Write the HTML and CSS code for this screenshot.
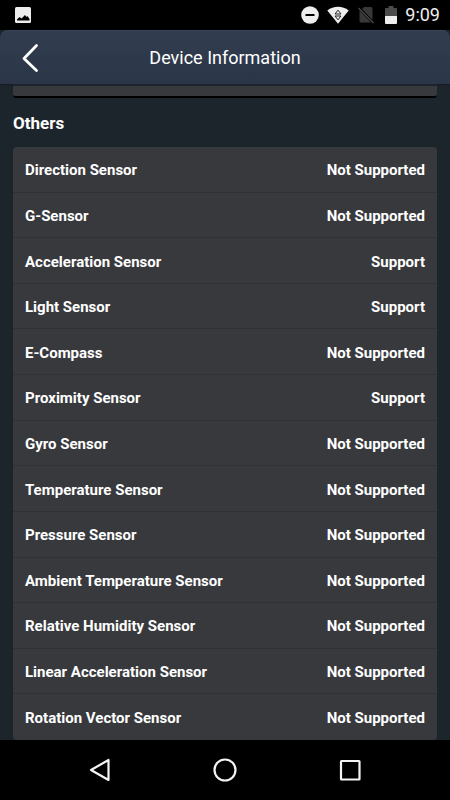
FILE: index.html
```html
<!DOCTYPE html>
<html lang="en">
<head>
<meta charset="utf-8">
<meta name="viewport" content="width=device-width, initial-scale=1">
<title>Device Information</title>
<link rel="stylesheet" href="styles.css">
</head>
<body>
<div class="status">
  <svg class="status-photo" width="16" height="16" viewBox="0 0 16 16" aria-hidden="true"><rect width="16" height="16" rx="1.500" fill="#eee"/><path d="M2 13.500V12.500L4.500 10l2 1.500L10 8l1.500 2 1-1 2 3v1.500z" fill="#000"/></svg>
  <svg width="18" height="18" viewBox="0 0 18 18" aria-hidden="true"><circle cx="9" cy="9" r="8.800" fill="#eee"/><path d="M4.500 9h9" stroke="#000" stroke-width="2"/></svg>
  <svg width="22" height="18" viewBox="0 0 22 18" aria-hidden="true"><path d="M0.300 4.500C6.500-.5 15.500-.5 21.700 4.500L11 17.800z" fill="#eee"/><path d="M11 4.200L14 8H8zM11 13.800L14 10H8z" fill="none" stroke="#222" stroke-width="1"/></svg>
  <svg width="18" height="18" viewBox="0 0 18 18" aria-hidden="true"><path d="M7 1h7q1.500 0 1.500 1.500V14L5 3zM2.500 4.500L14 16.500H4q-1.500 0-1.500-1.500z" fill="#383838"/><path d="M1.500 2L16.500 17" stroke="#4c4c4c" stroke-width="1.300"/></svg>
  <svg class="status-battery" width="12" height="18" viewBox="0 0 12 18" aria-hidden="true"><path d="M1 2h2.500V0h5v2H11q1 0 1 1v7H0V3q0-1 1-1z" fill="#4b4b4b"/><path d="M0 10h12v7q0 1-1 1H1q-1 0-1-1z" fill="#eee"/></svg>
  <time class="clock">9:09</time>
</div>
<header class="bar">
  <button class="back" aria-label="Back"><svg width="20" height="30" viewBox="0 0 20 30"><path d="M16.500 2.500L4 15.500l12.500 12" fill="none" stroke="#fff" stroke-width="2.800" stroke-linecap="round" stroke-linejoin="round"/></svg></button>
  <h1 class="title">Device Information</h1>
</header>
<main class="content">
  <div class="previous"></div>
  <h2 class="heading">Others</h2>
  <dl class="list">
    <div class="row"><dt>Direction Sensor</dt><dd>Not Supported</dd></div>
    <div class="row"><dt>G-Sensor</dt><dd>Not Supported</dd></div>
    <div class="row"><dt>Acceleration Sensor</dt><dd>Support</dd></div>
    <div class="row"><dt>Light Sensor</dt><dd>Support</dd></div>
    <div class="row"><dt>E-Compass</dt><dd>Not Supported</dd></div>
    <div class="row"><dt>Proximity Sensor</dt><dd>Support</dd></div>
    <div class="row"><dt>Gyro Sensor</dt><dd>Not Supported</dd></div>
    <div class="row"><dt>Temperature Sensor</dt><dd>Not Supported</dd></div>
    <div class="row"><dt>Pressure Sensor</dt><dd>Not Supported</dd></div>
    <div class="row"><dt>Ambient Temperature Sensor</dt><dd>Not Supported</dd></div>
    <div class="row"><dt>Relative Humidity Sensor</dt><dd>Not Supported</dd></div>
    <div class="row"><dt>Linear Acceleration Sensor</dt><dd>Not Supported</dd></div>
    <div class="row"><dt>Rotation Vector Sensor</dt><dd>Not Supported</dd></div>
  </dl>
</main>
<nav class="nav">
  <button aria-label="Back"><svg width="26" height="26" viewBox="0 0 26 26"><path d="M21.500 3v20L4 13z" stroke-width="2.200"/></svg></button>
  <button aria-label="Home"><svg width="26" height="26" viewBox="0 0 26 26"><circle cx="13" cy="13" r="10.500" stroke-width="2.200"/></svg></button>
  <button aria-label="Recent apps"><svg width="26" height="26" viewBox="0 0 26 26"><rect x="4" y="4" width="18.500" height="18.500" rx=".5" stroke-width="2.200"/></svg></button>
</nav>
</body>
</html>
```
FILE: styles.css
```css
* {
  box-sizing: border-box;
}

body {
  margin: 0;
  min-height: 100vh;
  display: flex;
  flex-direction: column;
  background: #1d252c;
  color: #fff;
  font-family: Roboto, "Liberation Sans", sans-serif;
}

h1, h2, dl, dd {
  margin: 0;
}

button {
  padding: 0;
  border: 0;
  background: none;
  cursor: pointer;
}

svg {
  display: block;
}

.status {
  height: 30px;
  padding: 0 10px 0 15px;
  display: flex;
  align-items: center;
  gap: 8px;
  background: #000;
}

.status-photo {
  margin-right: auto;
}

.status-battery {
  margin-left: 2px;
}

.clock {
  font-size: 18px;
  line-height: 30px;
  color: #eee;
}

.bar {
  height: 54px;
  padding: 0 20px;
  display: grid;
  grid-template-columns: 20px 1fr 20px;
  align-items: center;
  border-top: 1px solid #3b4558;
  border-radius: 8px 8px 0 0;
  background: linear-gradient(#323d50, #2a3647);
  box-shadow: 0 1px 2px #141a22;
}

.title {
  font-size: 18px;
  line-height: 24px;
  font-weight: 400;
  text-align: center;
}

.content {
  flex: 1;
  padding: 0 13px;
  display: flex;
  flex-direction: column;
}

.previous {
  height: 14px;
  border-top: 2px solid #1d222b;
  border-bottom: 2px solid #000;
  border-radius: 0 0 3px 3px;
  background: #38393d;
}

.heading {
  padding: 13px 0 12px;
  font-size: 17px;
  line-height: 24px;
  font-weight: 700;
}

.list {
  flex: 1;
  display: grid;
  grid-auto-rows: 1fr;
  border-radius: 4px;
  background: #38393d;
  overflow: hidden;
}

.row {
  padding: 2px 12px 0;
  display: flex;
  align-items: center;
  justify-content: space-between;
  font-size: 15px;
  line-height: 20px;
  font-weight: 700;
}

.row:not(:last-child) {
  border-bottom: 1px solid #313236;
}

.nav {
  height: 60px;
  padding: 0 37px;
  display: grid;
  grid-template-columns: repeat(3, 1fr);
  place-items: center;
  background: #000;
}

.nav svg {
  fill: none;
  stroke: #f4f4f4;
  stroke-linejoin: round;
}
```
